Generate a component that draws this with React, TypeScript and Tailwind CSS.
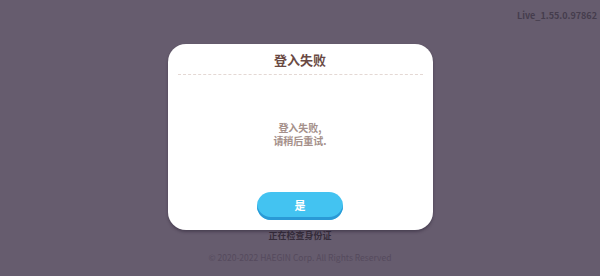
export default function App() {
  const font = { fontFamily: '"Noto Sans CJK SC", "Noto Sans", sans-serif' }
  return (
    <div
      className="relative w-[600px] h-[276px] bg-[#665c6e] overflow-hidden flex flex-col items-center"
      style={font}
    >
      {/* version */}
      <div className="absolute top-[9px] right-[3px] text-[9px] font-bold text-[#453d4d] leading-[14px]">
        Live_1.55.0.97862
      </div>

      {/* status text under dialog */}
      <div className="absolute top-[229px] left-0 right-0 text-center text-[9px] font-bold text-[#352c3a] leading-[14px]">
        正在检查身份证
      </div>

      {/* copyright */}
      <div className="absolute top-[250px] left-0 right-0 text-center text-[8.5px] text-[#554a5d] leading-[14px]">
        © 2020-2022 HAEGIN Corp. All Rights Reserved
      </div>

      {/* dialog */}
      <div className="relative mt-[44px] w-[265px] h-[186px] bg-white rounded-[18px] shadow-[0_2px_3px_rgba(40,30,50,0.45)] flex flex-col items-center">
        <div className="pt-[7px] h-[30px] text-[13px] font-bold text-[#6a4a44] leading-[18px]">
          登入失败
        </div>
        <div className="w-[245px] border-t border-dashed border-[#e4d8d4]" />
        <div className="flex-1 flex flex-col items-center justify-center text-[10px] font-bold text-[#a5908a] leading-[13px] text-center">
          <div>登入失败,</div>
          <div>请稍后重试.</div>
        </div>
        <button className="mb-[10px] w-[86px] h-[28px] rounded-full bg-[#43c3f1] shadow-[inset_0_-3px_0_#2a9ad6] text-white text-[11px] font-bold leading-none pb-[2px]">
          是
        </button>
      </div>
    </div>
  )
}
